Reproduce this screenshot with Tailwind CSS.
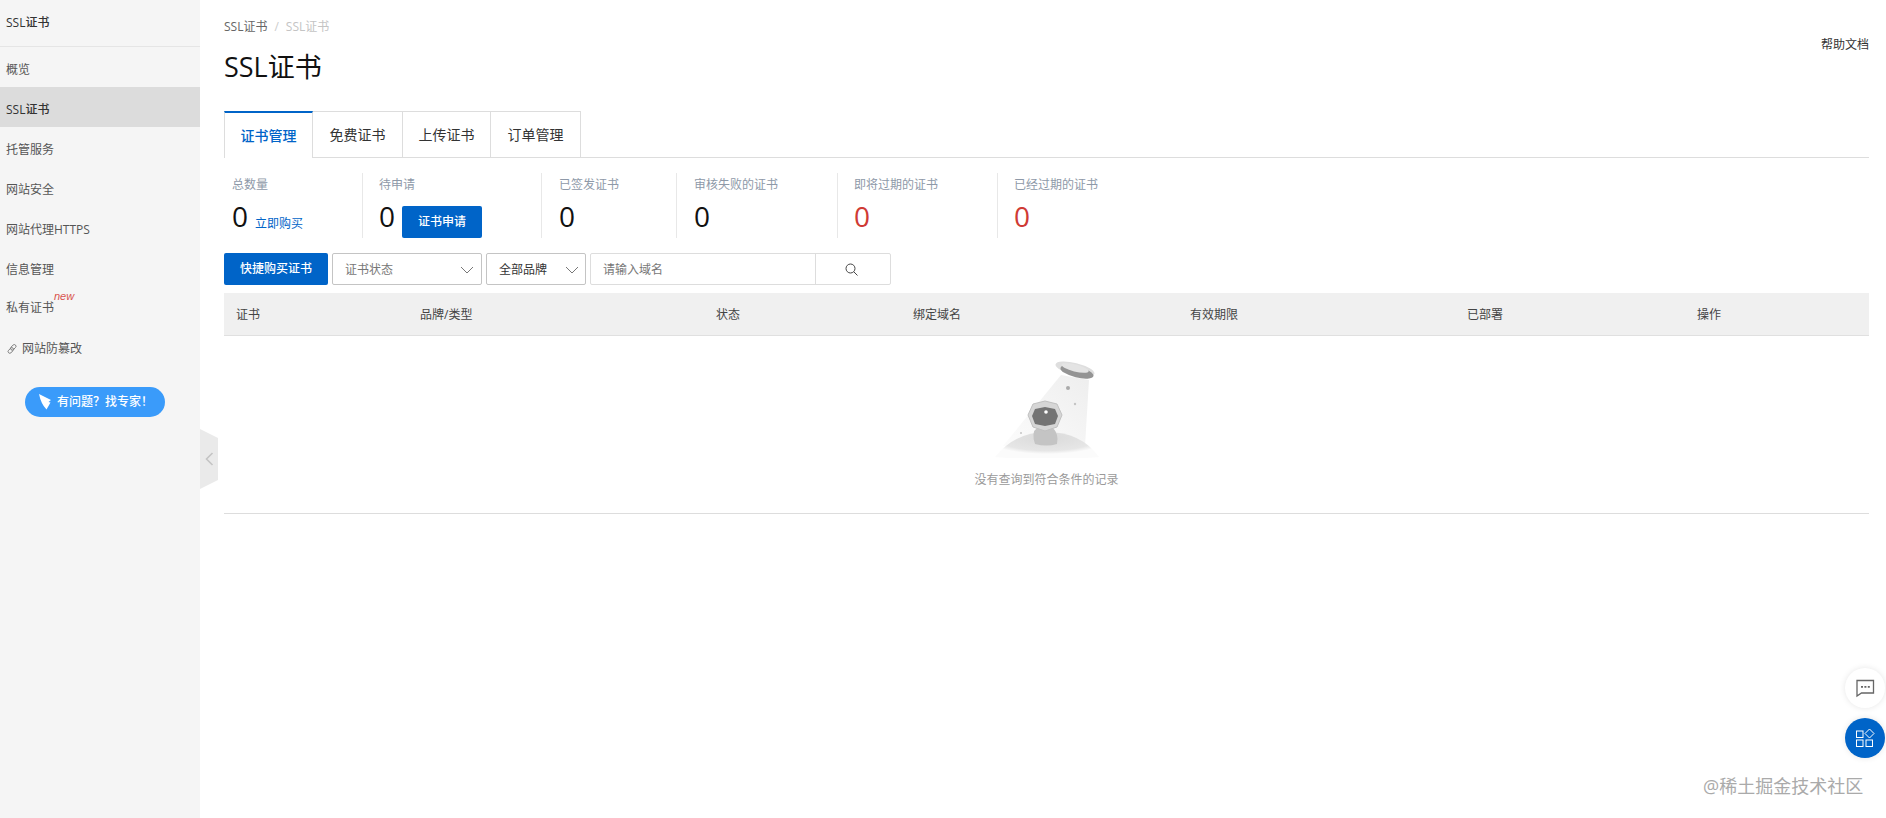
<!DOCTYPE html>
<html lang="zh">
<head>
<meta charset="utf-8">
<script src="https://cdn.jsdelivr.net/npm/@tailwindcss/browser@4"></script>
</head>
<body class="relative w-[1886px] h-[818px] overflow-hidden bg-white text-[12px] text-[#333] font-['Open_Sans','Noto_Sans_CJK_SC',sans-serif]">
<div class="flex h-[818px]">
  <aside class="relative w-[200px] shrink-0 bg-[#f5f5f5]">
    <div class="h-[47px] border-b border-[#e5e5e5] pl-[6px] flex items-center font-medium text-[#333]">SSL证书</div>
    <nav class="flex flex-col text-[#555]">
      <a class="h-10 pl-[6px] pt-[5px] flex items-center">概览</a>
      <a class="h-10 pl-[6px] pt-[5px] flex items-center bg-[#dcdcdc] font-medium text-[#333]">SSL证书</a>
      <a class="h-10 pl-[6px] pt-[5px] flex items-center">托管服务</a>
      <a class="h-10 pl-[6px] pt-[5px] flex items-center">网站安全</a>
      <a class="h-10 pl-[6px] pt-[5px] flex items-center">网站代理HTTPS</a>
      <a class="h-10 pl-[6px] pt-[5px] flex items-center">信息管理</a>
      <a class="relative h-10 pl-[6px] pt-[1px] flex items-center">私有证书<span class="absolute left-[54px] top-[2px] text-[11px] leading-[14px] italic text-[#d9534f] font-['Liberation_Sans',sans-serif]">new</span></a>
      <a class="h-10 pl-[7px] pt-[3px] flex items-center gap-[5px]">
        <svg class="w-[10px] h-[10px]" viewBox="0 0 10 10" fill="none" stroke="#777" stroke-width=".9"><rect x="-0.9" y="3.2" width="6.4" height="3.4" rx="1.7" transform="rotate(-45 2.3 4.9) translate(0 2.2)"/><rect x="4.6" y="3.2" width="6.4" height="3.4" rx="1.7" transform="rotate(-45 7.8 4.9) translate(0 -2.2)"/></svg>
        网站防篡改</a>
    </nav>
    <div class="mt-[20px] ml-[25px] w-[140px] h-[30px] rounded-[15px] bg-[#3a9bfa] text-white flex items-center pl-[13px] gap-[5px] font-medium">
      <svg class="w-[14px] h-[16px]" viewBox="0 0 14 16" fill="#fff"><path d="M1 0 L13 6 L10.5 8 L12.5 8.5 L8.5 15.5 Q3 10 1 0Z"/></svg>
      有问题？找专家！
    </div>
    <div class="absolute left-[200px] top-[429px] w-[18px] h-[60px] bg-[#eaeaea] [clip-path:polygon(0_0,100%_15%,100%_85%,0_100%)] flex items-center justify-center">
      <svg class="w-[9px] h-[14px]" viewBox="0 0 9 14" fill="none" stroke="#c4c4c4" stroke-width="1.6"><path d="M7.5 1 L1.5 7 L7.5 13"/></svg>
    </div>
  </aside>
  <main class="flex-1 pl-6 pr-[17px] relative">
    <div class="pt-[18px] h-[36px] leading-[18px] text-[#666] flex gap-[7px]"><span>SSL证书</span><span class="text-[#ccc]">/</span><span class="text-[#c4c4c4]">SSL证书</span></div>
    <div class="flex justify-between h-[75px]">
      <h1 class="text-[27px] leading-[38px] pt-[12px] font-normal text-[#111]">SSL证书</h1>
      <a class="text-[#333] leading-[16px] mt-[1px]">帮助文档</a>
    </div>
    <div class="flex h-[47px] border-b border-[#ddd] text-[14px] text-[#333]">
      <div class="w-[89px] h-[47px] bg-white border-x border-[#ddd] border-t-2 border-t-[#0064c8] text-[#0064c8] font-medium flex items-center justify-center">证书管理</div>
      <div class="w-[90px] h-[46px] border-t border-r border-[#ddd] flex items-center justify-center">免费证书</div>
      <div class="w-[88px] h-[46px] border-t border-r border-[#ddd] flex items-center justify-center">上传证书</div>
      <div class="w-[90px] h-[46px] border-t border-r border-[#ddd] flex items-center justify-center">订单管理</div>
    </div>
    <div class="flex mt-[15px] h-[65px]">
      <div class="w-[139px] border-r border-[#e8e8e8] pl-2">
        <div class="text-[#8e99a8] leading-[22px] pt-[1px]">总数量</div>
        <div class="flex items-center mt-[4px] h-[32px]"><span class="text-[28px] leading-[32px] text-[#111]">0</span><a class="ml-[7px] mt-[16px] text-[#0064c8]">立即购买</a></div>
      </div>
      <div class="w-[179px] border-r border-[#e8e8e8] pl-4">
        <div class="text-[#8e99a8] leading-[22px] pt-[1px]">待申请</div>
        <div class="flex items-center mt-[4px] h-[32px]"><span class="text-[28px] leading-[32px] text-[#111]">0</span><button class="ml-[7px] mt-[11px] w-[80px] h-[32px] rounded-[2px] bg-[#0064c8] text-white font-medium">证书申请</button></div>
      </div>
      <div class="w-[135px] border-r border-[#e8e8e8] pl-[17px]">
        <div class="text-[#8e99a8] leading-[22px] pt-[1px]">已签发证书</div>
        <div class="mt-[4px] h-[32px] text-[28px] leading-[32px] text-[#111]">0</div>
      </div>
      <div class="w-[161px] border-r border-[#e8e8e8] pl-[17px]">
        <div class="text-[#8e99a8] leading-[22px] pt-[1px]">审核失败的证书</div>
        <div class="mt-[4px] h-[32px] text-[28px] leading-[32px] text-[#111]">0</div>
      </div>
      <div class="w-[160px] border-r border-[#e8e8e8] pl-[16px]">
        <div class="text-[#8e99a8] leading-[22px] pt-[1px]">即将过期的证书</div>
        <div class="mt-[4px] h-[32px] text-[28px] leading-[32px] text-[#cf3a34]">0</div>
      </div>
      <div class="pl-[16px]">
        <div class="text-[#8e99a8] leading-[22px] pt-[1px]">已经过期的证书</div>
        <div class="mt-[4px] h-[32px] text-[28px] leading-[32px] text-[#cf3a34]">0</div>
      </div>
    </div>
    <div class="flex mt-[15px] h-[32px] gap-[4px]">
      <button class="w-[104px] h-[32px] rounded-[2px] bg-[#0064c8] text-white font-medium">快捷购买证书</button>
      <div class="w-[150px] h-[32px] rounded-[2px] border border-[#c4c4c4] flex items-center justify-between pl-[12px] pr-[7px] pt-[2px] text-[#777]">证书状态
        <svg class="w-[14px] h-[8px]" viewBox="0 0 14 8" fill="none" stroke="#777" stroke-width="1"><path d="M1 1 L7 7 L13 1"/></svg>
      </div>
      <div class="w-[100px] h-[32px] rounded-[2px] border border-[#c4c4c4] flex items-center justify-between pl-[12px] pr-[6px] pt-[2px] text-[#333]">全部品牌
        <svg class="w-[14px] h-[8px]" viewBox="0 0 14 8" fill="none" stroke="#777" stroke-width="1"><path d="M1 1 L7 7 L13 1"/></svg>
      </div>
      <div class="flex w-[301px] h-[32px] rounded-[2px] border border-[#ddd]">
        <div class="w-[225px] border-r border-[#ddd] flex items-center pl-[12px] pt-[2px] text-[#777]">请输入域名</div>
        <div class="flex-1 flex items-center justify-center pr-[3px]">
          <svg class="w-[13px] h-[13px]" viewBox="0 0 13 13" fill="none" stroke="#444" stroke-width="1"><circle cx="5.5" cy="5.5" r="4.5"/><path d="M8.8 8.8 L12.5 12.5"/></svg>
        </div>
      </div>
    </div>
    <div class="mt-[8px] grid grid-cols-[184px_296px_197px_277px_277px_230px_1fr] h-[43px] bg-[#f0f0f0] border-b border-[#e0e0e0] items-center pl-3 pt-[2px] text-[#444]">
      <span>证书</span><span>品牌/类型</span><span>状态</span><span>绑定域名</span><span>有效期限</span><span>已部署</span><span>操作</span>
    </div>
    <div class="h-[178px] border-b border-[#ddd] flex flex-col items-center pt-[24px]">
      <svg class="w-[104px] h-[98px]" viewBox="0 0 104 98">
        <defs>
          <linearGradient id="beam" x1="1" y1="0" x2="0" y2="1"><stop offset="0" stop-color="#eeeeee"/><stop offset="1" stop-color="#fcfcfc"/></linearGradient>
          <radialGradient id="ground" cx=".5" cy=".2" r=".6"><stop offset="0" stop-color="#dadada"/><stop offset=".8" stop-color="#e6e6e6"/><stop offset="1" stop-color="#fbfbfb"/></radialGradient>
        </defs>
        <path d="M66 15 L8 86 L90 86 L94 20 Z" fill="url(#beam)"/>
        <path d="M0 97 Q20 72 52 72 Q86 72 104 97 Q52 102 0 97Z" fill="url(#ground)"/>
        <ellipse cx="80" cy="9" rx="20" ry="6" transform="rotate(14 80 9)" fill="#dedede"/>
        <ellipse cx="82" cy="12" rx="17" ry="5.5" transform="rotate(14 82 12)" fill="#949494"/>
        <ellipse cx="80" cy="8" rx="14" ry="3.5" transform="rotate(14 80 8)" fill="#e4e4e4"/>
        <circle cx="73" cy="28" r="2" fill="#aaa"/>
        <circle cx="80" cy="44" r="1.2" fill="#c4c4c4"/>
        <circle cx="26" cy="73" r="1" fill="#c4c4c4"/>
        <path d="M40 84 Q36 72 42 68 L58 68 Q64 74 62 84 Q52 87 40 84Z" fill="#c4c4c4"/>
        <path d="M38 44 L50 41 L62 44 L67 55 L62 67 L50 71 L38 67 L33 55Z" fill="#d6d6d6" stroke="#c0c0c0"/>
        <path d="M40 49 L50 47 L60 49 L63 56 L60 64 L50 66 L40 64 L37 56Z" fill="#747474"/>
        <circle cx="51" cy="52" r="1.8" fill="#fff"/>
      </svg>
      <div class="mt-[13px] text-[#9a9a9a] leading-[18px]">没有查询到符合条件的记录</div>
    </div>
  </main>
</div>
<div class="absolute left-[1845px] top-[668px] w-10 h-10 rounded-full bg-white shadow-[0_0_6px_rgba(0,0,0,0.1)] flex items-center justify-center">
  <svg class="w-[20px] h-[20px]" viewBox="0 0 20 20" fill="none" stroke="#666" stroke-width="1.3"><path d="M2 2.5 H18.5 V15 H6.5 L2 18 Z"/><path d="M6 8.8 H8 M9.4 8.8 H11.4 M12.8 8.8 H14.8" stroke-width="1.8"/></svg>
</div>
<div class="absolute left-[1845px] top-[718px] w-10 h-10 rounded-full bg-[#0064c8] shadow-[0_0_6px_rgba(0,0,0,0.1)] flex items-center justify-center">
  <svg class="w-[20px] h-[20px]" viewBox="0 0 20 20" fill="none" stroke="#fff" stroke-width="1"><rect x="1.5" y="3" width="6.5" height="6.5"/><rect x="1.5" y="12" width="6.5" height="6.5"/><rect x="11" y="12" width="6.5" height="6.5"/><path d="M14.5 1 L19 5.5 L14.5 10 L10 5.5 Z"/></svg>
</div>
<div class="absolute left-[1703px] top-[772px] text-[18px] leading-[28px] text-[#aaa]">@稀土掘金技术社区</div>
</body>
</html>
